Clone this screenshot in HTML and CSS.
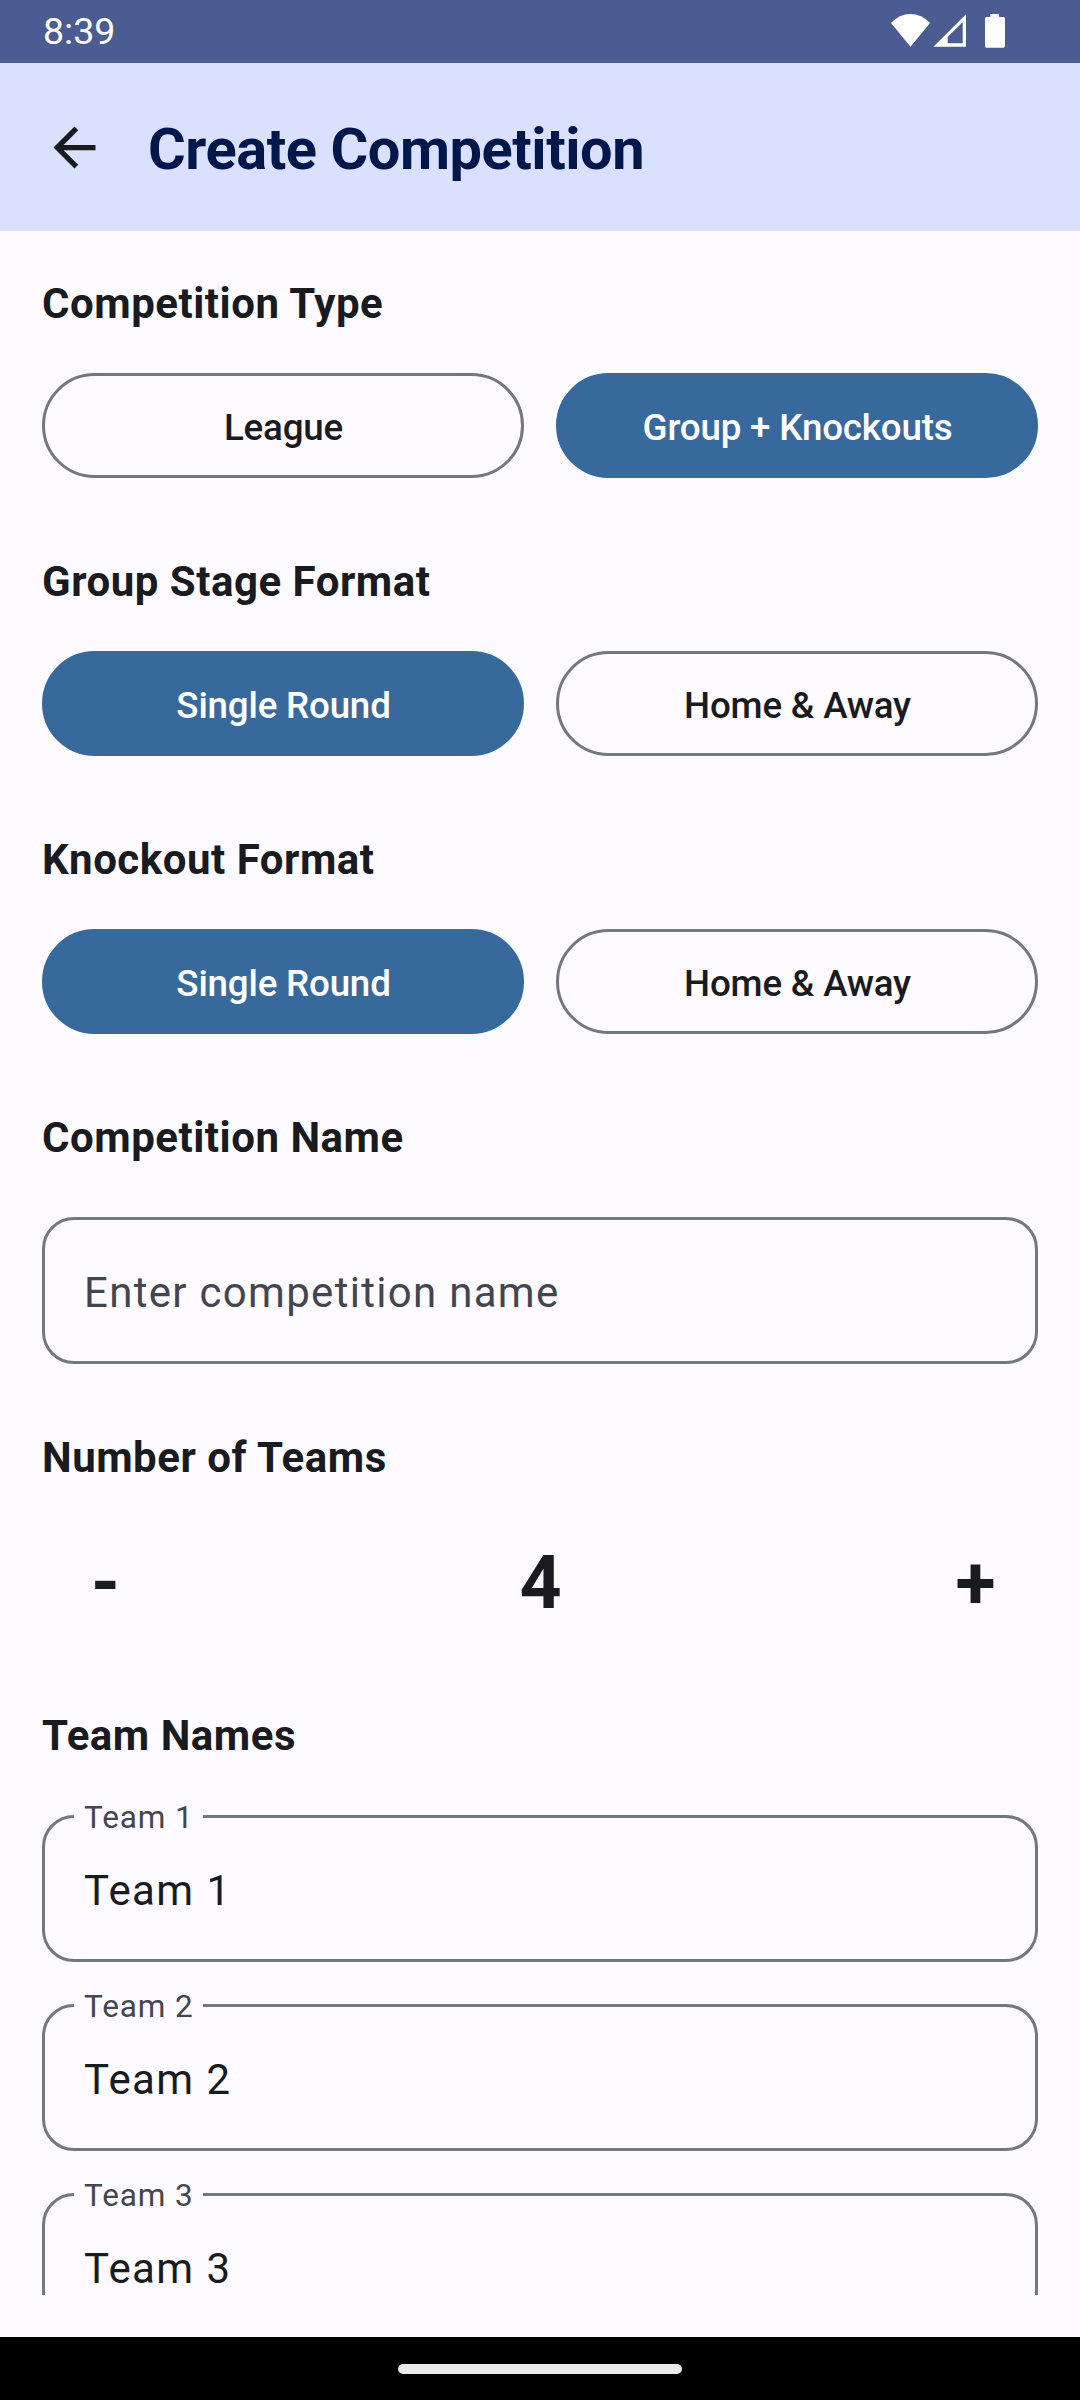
FILE: index.html
```html
<!DOCTYPE html>
<html lang="en">
<head>
<meta charset="utf-8">
<title>Create Competition</title>
<link rel="stylesheet" href="styles.css">
</head>
<body>
<div class="status-bar">
  <span class="clock">8:39</span>
  <svg class="status-icons" width="120" height="63" viewBox="0 0 120 63" fill="#fff">
    <path d="M20.500 46.700L1 23Q9.500 14 20.500 14T40 23Z"/>
    <path fill-rule="evenodd" d="M43.500 46.700L76 14.300V46.700ZM57.700 36.700V43.300H72.700V22.300Z"/>
    <path d="M100.300 14H109V17H113.500Q115 17 115 18.500V46Q115 47.700 113.300 47.700H96.700Q95 47.700 95 46V18.500Q95 17 96.500 17H100.300Z"/>
  </svg>
</div>
<header class="app-bar">
  <svg class="back" viewBox="0 0 24 24" fill="#1a1b20"><path d="M20 11H7.830l5.590-5.590L12 4l-8 8 8 8 1.410-1.410L7.830 13H20v-2z"/></svg>
  <h1 class="title">Create Competition</h1>
</header>
<main class="content">
  <h2 class="heading">Competition Type</h2>
  <div class="options">
    <button class="option">League</button>
    <button class="option selected">Group + Knockouts</button>
  </div>
  <h2 class="heading">Group Stage Format</h2>
  <div class="options">
    <button class="option selected">Single Round</button>
    <button class="option">Home &amp; Away</button>
  </div>
  <h2 class="heading">Knockout Format</h2>
  <div class="options">
    <button class="option selected">Single Round</button>
    <button class="option">Home &amp; Away</button>
  </div>
  <h2 class="heading">Competition Name</h2>
  <div class="field name-field"><span class="placeholder">Enter competition name</span></div>
  <h2 class="heading">Number of Teams</h2>
  <div class="stepper">
    <span class="step">-</span>
    <span class="step">4</span>
    <span class="step">+</span>
  </div>
  <h2 class="heading">Team Names</h2>
  <div class="teams">
    <div class="field"><span class="label">Team 1</span>Team 1</div>
    <div class="field"><span class="label">Team 2</span>Team 2</div>
    <div class="field"><span class="label">Team 3</span>Team 3</div>
  </div>
</main>
<footer class="nav-bar"><div class="handle"></div></footer>
</body>
</html>
```
FILE: styles.css
```css
* {
  box-sizing: border-box;
}

body {
  margin: 0;
  width: 1080px;
  height: 2400px;
  overflow: hidden;
  display: flex;
  flex-direction: column;
  background: #fdfbff;
  color: #1a1b20;
  font-family: Roboto, sans-serif;
}

.status-bar {
  flex: none;
  height: 63px;
  padding: 0 70px 0 43px;
  display: flex;
  align-items: center;
  justify-content: space-between;
  background: #4b5c92;
}

.clock {
  color: #fff;
  font-size: 37.5px;
  line-height: 63px;
}

.status-icons {
  display: block;
}

.app-bar {
  flex: none;
  height: 168px;
  padding-left: 43px;
  display: flex;
  align-items: center;
  gap: 42px;
  background: #dae1ff;
}

.back {
  width: 63px;
  height: 63px;
}

.title {
  margin: 0;
  padding-top: 3px;
  color: #00174b;
  font-size: 57.75px;
  font-weight: 700;
  line-height: 74px;
  letter-spacing: -0.45px;
}

.content {
  flex: none;
  height: 2064px;
  padding: 42px 42px 0;
  overflow: hidden;
}

.heading {
  height: 63px;
  margin: 0;
  font-size: 42px;
  font-weight: 700;
  line-height: 61px;
  letter-spacing: 0.52px;
}

.options {
  display: grid;
  grid-template-columns: 1fr 1fr;
  gap: 32px;
  margin: 37px 0 73px;
}

.option {
  height: 105px;
  padding: 4px 0 0 1px;
  border: 3px solid #74777f;
  border-radius: 53px;
  background: transparent;
  color: #1a1b20;
  font-family: inherit;
  font-size: 36.75px;
  font-weight: 500;
  letter-spacing: -0.2px;
}

.option.selected {
  border-color: #38699c;
  background: #38699c;
  color: #fff;
}

.field {
  position: relative;
  height: 147px;
  padding: 4px 39px 0;
  display: flex;
  align-items: center;
  border: 3px solid #74777f;
  border-radius: 32px;
  font-size: 42px;
  letter-spacing: 1.4px;
}

.name-field {
  margin: 47px 0 63px;
}

.placeholder {
  color: #44464f;
  letter-spacing: 1.3px;
}

.label {
  position: absolute;
  top: -19px;
  left: 29px;
  width: 129px;
  padding-left: 10px;
  background: #fdfbff;
  color: #44464f;
  font-size: 31.5px;
  line-height: 38px;
  letter-spacing: 0.9px;
}

.stepper {
  display: flex;
  justify-content: space-between;
  margin: 30px 0 59px;
}

.step {
  width: 126px;
  padding-left: 1px;
  text-align: center;
  font-size: 73.5px;
  font-weight: 700;
  line-height: 126px;
}

.teams {
  display: flex;
  flex-direction: column;
  gap: 42px;
  margin-top: 47px;
}

.nav-bar {
  flex: none;
  height: 63px;
  margin-top: auto;
  display: flex;
  align-items: center;
  justify-content: center;
  background: #000;
}

.handle {
  width: 284px;
  height: 10px;
  border-radius: 5px;
  background: #ebebeb;
}
```
